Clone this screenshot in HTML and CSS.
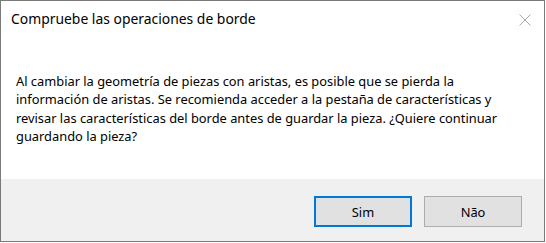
FILE: index.html
```html
<!DOCTYPE html>
<html lang="es">
<head>
<meta charset="utf-8">
<title>Compruebe las operaciones de borde</title>
<link rel="stylesheet" href="styles.css">
</head>
<body>
<div class="window">
  <div class="titlebar">
    <span class="title">Compruebe las operaciones de borde</span>
    <span class="close" aria-label="Cerrar">
      <svg width="12" height="12" viewBox="0 0 12 12"><path d="M0.5 0.5 L11.5 11.5 M11.5 0.5 L0.5 11.5" stroke="#a8a8a8" stroke-width="1" fill="none"/></svg>
    </span>
  </div>
  <div class="content">
    <p class="message">Al cambiar la geometría de piezas con aristas, es posible que se pierda la<br>información de aristas. Se recomienda acceder a la pestaña de características y<br>revisar las características del borde antes de guardar la pieza. ¿Quiere continuar<br>guardando la pieza?</p>
  </div>
  <div class="footer">
    <button class="btn btn-default">Sim</button>
    <button class="btn">Não</button>
  </div>
</div>
</body>
</html>
```
FILE: styles.css
```css
html, body {
  margin: 0;
  padding: 0;
  background: #ffffff;
}
body {
  font-family: "Noto Sans", "Open Sans", sans-serif;
  color: #000;
}
.window {
  width: 543px;
  height: 240px;
  border: 1px solid #7a7a7a;
  background: #ffffff;
  display: flex;
  flex-direction: column;
}
.titlebar {
  height: 30px;
  display: flex;
  align-items: center;
  justify-content: space-between;
  padding-left: 10px;
  padding-right: 13px;
}
.title {
  font-size: 13.9px;
  line-height: 20px;
  margin-top: 6px;
  color: #000;
}
.close {
  display: flex;
  margin-top: 8px;
}
.content {
  flex: 1;
  padding: 41px 0 0 15px;
}
.message {
  margin: 0;
  font-size: 12.85px;
  line-height: 18.4px;
  white-space: nowrap;
}
.footer {
  height: 62px;
  background: #f0f0f0;
  display: flex;
  justify-content: flex-end;
  align-items: flex-start;
  gap: 12px;
  padding: 17px 22px 0 0;
  box-sizing: border-box;
}
.btn {
  width: 98px;
  height: 31px;
  box-sizing: border-box;
  background: #e1e1e1;
  border: 1px solid #adadad;
  font-family: "Noto Sans", "Open Sans", sans-serif;
  font-size: 12.85px;
  color: #000;
  padding: 0;
  margin: 0;
}
.btn-default {
  border: 2px solid #0078d7;
}
```
